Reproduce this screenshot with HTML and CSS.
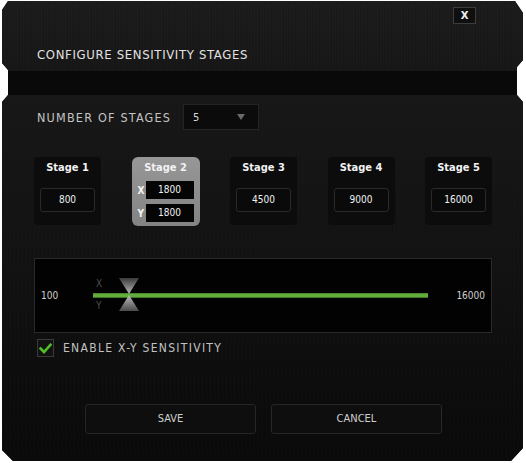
FILE: index.html
```html
<!DOCTYPE html>
<html>
<head>
<meta charset="utf-8">
<link rel="stylesheet" href="styles.css">
</head>
<body>
<div class="window">
  <div class="top">
    <div class="close-row"><div class="close">X</div></div>
    <h1 class="title">CONFIGURE SENSITIVITY STAGES</h1>
  </div>
  <div class="strip"></div>
  <div class="main">
    <div class="stages-row">
      <span class="label">NUMBER OF STAGES</span>
      <div class="select"><span class="sel-val">5</span><span class="arrow"></span></div>
    </div>
    <div class="cards">
      <div class="card"><div class="card-title">Stage 1</div><div class="val">800</div></div>
      <div class="card active">
        <div class="card-title">Stage 2</div>
        <div class="xy"><span class="ax">X</span><span class="xyval">1800</span></div>
        <div class="xy"><span class="ax">Y</span><span class="xyval">1800</span></div>
      </div>
      <div class="card"><div class="card-title">Stage 3</div><div class="val">4500</div></div>
      <div class="card"><div class="card-title">Stage 4</div><div class="val">9000</div></div>
      <div class="card"><div class="card-title">Stage 5</div><div class="val">16000</div></div>
    </div>
    <div class="slider">
      <span class="min">100</span>
      <div class="track-wrap">
        <span class="axis axis-x">X</span>
        <span class="axis axis-y">Y</span>
        <div class="track"></div>
        <svg class="thumb" width="22" height="34" viewBox="0 0 22 34">
          <defs>
            <linearGradient id="gt" x1="0" y1="0" x2="0" y2="1">
              <stop offset="0" stop-color="#3a3a3a"/>
              <stop offset="1" stop-color="#b8b8b8"/>
            </linearGradient>
            <linearGradient id="gb" x1="0" y1="1" x2="0" y2="0">
              <stop offset="0" stop-color="#4a4a4a"/>
              <stop offset="1" stop-color="#bdbdbd"/>
            </linearGradient>
          </defs>
          <polygon points="1,0 21,0 11,16" fill="url(#gt)"/>
          <polygon points="11,17 21,33 1,33" fill="url(#gb)"/>
        </svg>
      </div>
      <span class="max">16000</span>
    </div>
    <div class="check">
      <span class="box">
        <svg width="13" height="11" viewBox="0 0 13 11"><path d="M1.5 5.5 L5 9 L11.5 1.8" fill="none" stroke="#4fbf26" stroke-width="2.6" stroke-linecap="square"/></svg>
      </span>
      <span class="check-label">ENABLE X-Y SENSITIVITY</span>
    </div>
    <div class="buttons">
      <div class="btn">SAVE</div>
      <div class="btn">CANCEL</div>
    </div>
  </div>
</div>
</body>
</html>
```
FILE: styles.css
```css
html, body {
  margin: 0;
  padding: 0;
  background: #ffffff;
}
body {
  font-family: "DejaVu Sans Condensed", "DejaVu Sans", sans-serif;
  color: #d8d8d8;
}
.window {
  margin: 1px 0 0 2px;
  width: 521px;
  height: 460px;
  display: flex;
  flex-direction: column;
  background: #080808;
  clip-path: polygon(6px 0, 513px 0, 521px 12px, 521px 59px, 515px 66px, 515px 94px, 521px 101px, 521px 447px, 509px 460px, 11px 460px, 0 449px, 0 101px, 6px 94px, 6px 69px, 0 62px, 0 9px);
}
.top {
  height: 70px;
  box-sizing: border-box;
  padding-top: 6px;
  background:
    repeating-linear-gradient(90deg, rgba(255,255,255,0.012) 0 1px, rgba(0,0,0,0) 1px 3px),
    linear-gradient(#1b1b1b, #161616);
}
.close-row {
  display: flex;
  justify-content: flex-end;
  padding-right: 47px;
}
.close {
  width: 23px;
  height: 17px;
  box-sizing: border-box;
  border: 1px solid #3c3c3c;
  background: #0f0f0f;
  color: #f0f0f0;
  font-family: "DejaVu Sans", sans-serif;
  font-weight: bold;
  font-size: 10px;
  line-height: 15px;
  text-align: center;
}
.title {
  margin: 23px 0 0 35px;
  font-size: 13px;
  line-height: 16px;
  font-weight: normal;
  color: #e2e2e2;
  letter-spacing: 0.65px;
}
.strip {
  height: 24px;
  background: #090909;
}
.main {
  flex: 1;
  box-sizing: border-box;
  padding: 9px 0 0 32px;
  background:
    repeating-linear-gradient(90deg, rgba(255,255,255,0.01) 0 1px, rgba(0,0,0,0) 1px 4px),
    linear-gradient(#171717, #121212 45%, #0c0c0c 80%, #0a0a0a);
}
.stages-row {
  display: flex;
  align-items: center;
  height: 26px;
}
.label {
  margin-left: 3px;
  width: 146px;
  font-size: 12.5px;
  letter-spacing: 1.2px;
  color: #c4c4c4;
}
.select {
  width: 76px;
  height: 26px;
  box-sizing: border-box;
  background: #0b0b0b;
  border: 1px solid #242424;
  display: flex;
  align-items: center;
  justify-content: space-between;
  padding: 0 13px 0 9px;
}
.sel-val {
  font-size: 11px;
  color: #d8d8d8;
}
.arrow {
  width: 0;
  height: 0;
  border-left: 4px solid transparent;
  border-right: 4px solid transparent;
  border-top: 6px solid #6a6a6a;
}
.cards {
  margin-top: 27px;
  width: 458px;
  display: flex;
  justify-content: space-between;
  align-items: flex-start;
}
.card {
  width: 67px;
  height: 68px;
  box-sizing: border-box;
  padding: 4px 6px 0;
  background: #0c0c0c;
  border-radius: 4px;
  display: flex;
  flex-direction: column;
}
.card-title {
  height: 14px;
  font-size: 11px;
  line-height: 14px;
  font-weight: bold;
  text-align: center;
  color: #f2f2f2;
}
.val {
  margin-top: 13px;
  height: 24px;
  box-sizing: border-box;
  border: 1px solid #2a2a2a;
  border-radius: 3px;
  background: #0a0a0a;
  font-size: 10px;
  line-height: 22px;
  text-align: center;
  color: #f0f0f0;
}
.card.active {
  width: 68px;
  height: 69px;
  background: linear-gradient(#979797, #838383);
  border-radius: 6px;
}
.xy {
  display: flex;
  align-items: center;
  height: 18px;
}
.xy + .xy { margin-top: 5px; }
.card.active .card-title + .xy { margin-top: 6px; }
.ax {
  width: 8px;
  font-size: 10px;
  font-weight: bold;
  color: #f4f4f4;
}
.xyval {
  flex: 1;
  height: 18px;
  background: #050505;
  font-size: 10px;
  line-height: 18px;
  text-align: center;
  color: #f2f2f2;
}
.slider {
  margin-top: 32px;
  width: 458px;
  height: 75px;
  box-sizing: border-box;
  border: 1px solid #2a2a2a;
  background: #020202;
  display: flex;
  align-items: center;
}
.min {
  width: 58px;
  padding-left: 6px;
  box-sizing: border-box;
  font-size: 10px;
  color: #cfcfcf;
}
.track-wrap {
  position: relative;
  width: 335px;
  height: 5px;
}
.track {
  height: 5px;
  box-sizing: border-box;
  background: #62ad3c;
  border-top: 1px solid #4b8a2c;
  border-bottom: 1px solid #3e7424;
}
.thumb {
  position: absolute;
  left: 25px;
  top: -15px;
}
.axis {
  position: absolute;
  left: 3px;
  font-size: 10px;
  line-height: 12px;
  color: #4e4e4e;
}
.axis-x { top: -15px; }
.axis-y { top: 7px; }
.max {
  flex: 1;
  padding-right: 6px;
  text-align: right;
  font-size: 10px;
  color: #cfcfcf;
}
.check {
  margin-top: 6px;
  display: flex;
  align-items: center;
  height: 18px;
}
.box {
  margin-left: 3px;
  width: 17px;
  height: 18px;
  box-sizing: border-box;
  border: 1px solid #3a3a3a;
  background: #121212;
  display: flex;
  align-items: center;
  justify-content: center;
}
.check-label {
  margin-left: 9px;
  font-size: 12px;
  letter-spacing: 1.3px;
  color: #c2c2c2;
}
.buttons {
  margin: 47px 0 0 51px;
  display: flex;
  gap: 15px;
}
.btn {
  width: 171px;
  height: 30px;
  box-sizing: border-box;
  border: 1px solid #262626;
  border-radius: 3px;
  background: #0e0e0e;
  font-size: 11px;
  line-height: 28px;
  text-align: center;
  color: #cfcfcf;
}
```
